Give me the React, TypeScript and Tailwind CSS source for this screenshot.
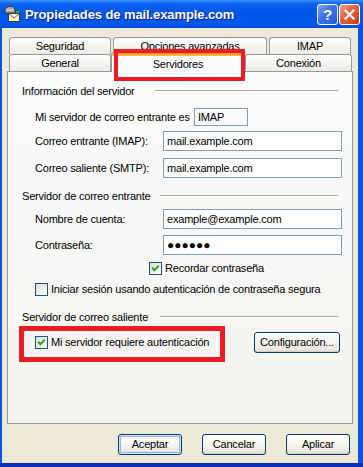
import React from 'react';

const font = "font-['Liberation_Sans',Arial,sans-serif]";

function TitleIcon() {
  return (
    <svg width="18" height="18" viewBox="0 0 18 18" className="shrink-0">
      <path d="M2 8 V5 Q2 1.5 6 1.5 H9 Q12 1.5 12 5 V8 Z" fill="#A8A8A8" stroke="#3A3A3A" strokeWidth="1" />
      <path d="M3 5 H11" stroke="#E8E8E8" strokeWidth="1" />
      <rect x="5.5" y="8.5" width="11" height="8" fill="#FFF6C8" stroke="#3A3A3A" strokeWidth="1" />
      <path d="M5.5 8.5 L11 13 L16.5 8.5" fill="none" stroke="#6A6A6A" strokeWidth="1" />
      <rect x="13" y="6" width="3" height="2" fill="#16C016" />
    </svg>
  );
}

function TitleBar() {
  return (
    <div className="h-[28px] shrink-0 flex items-center pl-[3px] pr-[3px] bg-[linear-gradient(to_bottom,#3C91FF_0%,#0A60EE_14%,#0055E5_50%,#0059EA_85%,#0048D6_100%)]">
      <TitleIcon />
      <span className={`ml-[4px] text-[13px] font-bold text-white leading-none tracking-[-0.1px] [text-shadow:1px_1px_0_#0B1F8C] ${font}`}>
        Propiedades de mail.example.com
      </span>
      <div className="ml-auto flex gap-[1px] items-center mt-[1px]">
        <div className="w-[21px] h-[21px] rounded-[3px] border border-white flex items-center justify-center bg-[linear-gradient(135deg,#7FA8FB_0%,#3D72EA_45%,#2257D8_100%)]">
          <span className={`text-white font-bold text-[15px] leading-none ${font}`}>?</span>
        </div>
        <div className="w-[21px] h-[21px] rounded-[3px] border border-white flex items-center justify-center bg-[linear-gradient(135deg,#F3A38A_0%,#E2603A_45%,#C93E12_100%)]">
          <svg width="11" height="11" viewBox="0 0 11 11">
            <path d="M1.5 1.5 L9.5 9.5 M9.5 1.5 L1.5 9.5" stroke="#FFFFFF" strokeWidth="2.2" strokeLinecap="square" />
          </svg>
        </div>
      </div>
    </div>
  );
}

function BackTab({label, w}: {label: string; w: string}) {
  return (
    <div className={`${w} h-[17px] rounded-t-[3px] border border-b-0 border-[#919B9C] bg-[linear-gradient(to_bottom,#FFFFFF,#ECEBE6)] flex items-center justify-center overflow-hidden`}>
      <span className="leading-[13px]">{label}</span>
    </div>
  );
}

function CheckBox({checked}: {checked?: boolean}) {
  return (
    <span className="w-[13px] h-[13px] shrink-0 border border-[#1C5180] bg-[linear-gradient(135deg,#DCDCD7,#FFFFFF)] flex items-center justify-center">
      {checked && (
        <svg width="9" height="9" viewBox="0 0 9 9">
          <path d="M1.2 3.8 L3.4 6.2 L7.8 1.6" stroke="#21A121" strokeWidth="2" fill="none" />
        </svg>
      )}
    </span>
  );
}

function Header({label, line}: {label: string; line: string}) {
  return (
    <div className="h-[14px] flex items-center justify-between pl-[14px] pr-[14px]">
      <span className="leading-[13px]">{label}</span>
      <div className={`${line} h-[2px] border-t border-[#ACA899] border-b border-b-white`} />
    </div>
  );
}

function Field({label, value, mt}: {label: string; value: React.ReactNode; mt: string}) {
  return (
    <div className={`${mt} h-[20px] flex items-center pl-[27px] pr-[10px]`}>
      <span className="flex-1 leading-[13px]">{label}</span>
      <div className="w-[179px] h-[20px] border border-[#7F9DB9] bg-white flex items-center pl-[3px]">
        {value}
      </div>
    </div>
  );
}

function XpButton({label, w, isDefault}: {label: string; w: string; isDefault?: boolean}) {
  return (
    <button
      className={`${w} h-[21px] rounded-[3px] border border-[#003C74] bg-[linear-gradient(to_bottom,#FFFFFF_0%,#F5F4EF_55%,#E3E0D6_100%)] flex items-center justify-center leading-[13px] ${
        isDefault
          ? 'shadow-[inset_0_0_0_1px_#CEE3FC,inset_0_0_0_2px_#92B3EE]'
          : 'shadow-[inset_0_-1px_0_0_#D6D0C5]'
      }`}
    >
      {label}
    </button>
  );
}

export default function App() {
  return (
    <div className={`relative w-[363px] h-[467px] overflow-hidden flex flex-col bg-[#0055E5] text-[11px] text-black tracking-[-0.2px] ${font}`}>
      <TitleBar />
      <div className="flex-1 ml-[2px] mr-[5px] bg-[#ECE9D8] flex flex-col pt-[9px] px-[5px]">
        {/* tabs */}
        <div className="flex gap-[2px] pl-[2px]">
          <BackTab label="Seguridad" w="w-[102px]" />
          <BackTab label="Opciones avanzadas" w="w-[154px]" />
          <BackTab label="IMAP" w="w-[82px]" />
        </div>
        <div className="flex pl-[2px] h-[17px]">
          <BackTab label="General" w="w-[102px]" />
          <div className="relative z-10 w-[134px] h-[20px] -mt-[2px] rounded-t-[3px] border border-b-0 border-[#919B9C] bg-[#FCFCFE] flex flex-col">
            <div className="h-[3px] rounded-t-[2px] bg-[linear-gradient(to_bottom,#E68B2C,#FFC73C)]" />
            <div className="flex-1 flex items-center justify-center">
              <span className="leading-[13px]">Servidores</span>
            </div>
          </div>
          <BackTab label="Conexión" w="w-[107px]" />
        </div>

        {/* panel */}
        <div className="h-[353px] border border-[#919B9C] bg-[linear-gradient(to_bottom,#FCFCFE,#F4F3EE)] flex flex-col">
          <div className="mt-[12px]">
            <Header label="Información del servidor" line="w-[183px]" />
          </div>
          <div className="mt-[10px] h-[18px] flex items-center pl-[27px]">
            <span className="w-[159px] leading-[13px]">Mi servidor de correo entrante es</span>
            <div className="w-[54px] h-[18px] border border-[#7F9DB9] flex items-center pl-[3px]">IMAP</div>
          </div>
          <Field mt="mt-[5px]" label="Correo entrante (IMAP):" value="mail.example.com" />
          <Field mt="mt-[7px]" label="Correo saliente (SMTP):" value="mail.example.com" />

          <div className="mt-[11px]">
            <Header label="Servidor de correo entrante" line="w-[178px]" />
          </div>
          <Field mt="mt-[6px]" label="Nombre de cuenta:" value="example@example.com" />
          <Field
            mt="mt-[6px]"
            label="Contraseña:"
            value={<span className="tracking-[0px] text-[12px] leading-none">●●●●●●</span>}
          />
          <div className="mt-[7px] h-[13px] flex items-center pl-[141px] gap-[3px]">
            <CheckBox checked />
            <span className="leading-[13px]">Recordar contraseña</span>
          </div>
          <div className="mt-[8px] h-[13px] flex items-center pl-[27px] gap-[3px]">
            <CheckBox />
            <span className="leading-[13px]">Iniciar sesión usando autenticación de contraseña segura</span>
          </div>

          <div className="mt-[14px]">
            <Header label="Servidor de correo saliente" line="w-[178px]" />
          </div>
          <div className="mt-[8px] h-[21px] flex items-center pl-[27px] pr-[12px]">
            <CheckBox checked />
            <span className="ml-[3px] leading-[13px]">Mi servidor requiere autenticación</span>
            <div className="ml-auto">
              <XpButton label="Configuración..." w="w-[86px]" />
            </div>
          </div>
        </div>

        {/* dialog buttons */}
        <div className="mt-[10px] flex justify-end gap-[20px] pr-[3px]">
          <XpButton label="Aceptar" w="w-[64px]" isDefault />
          <XpButton label="Cancelar" w="w-[64px]" />
          <XpButton label="Aplicar" w="w-[64px]" />
        </div>
      </div>
      <div className="h-[4px] shrink-0 bg-[#0A2FB8]" />

      {/* red annotation boxes */}
      <div className="absolute left-[114px] top-[49px] w-[131px] h-[32px] border-[4px] border-[#ED1C24] z-20" />
      <div className="absolute left-[19px] top-[326px] w-[206px] h-[36px] border-[5px] border-[#ED1C24] z-20" />
    </div>
  );
}
